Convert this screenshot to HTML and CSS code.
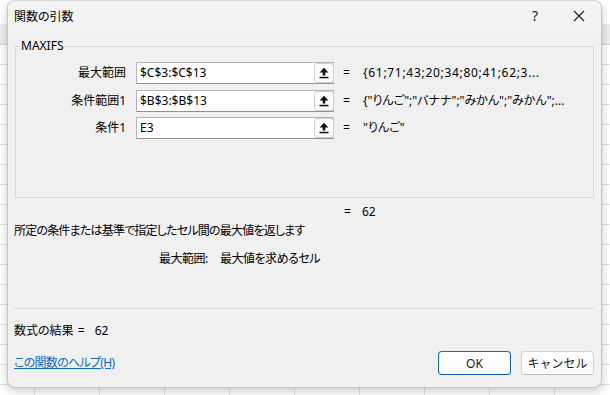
FILE: index.html
```html
<!DOCTYPE html>
<html lang="ja">
<head>
  <meta charset="UTF-8">
  <title>関数の引数</title>
  <link rel="stylesheet" href="styles.css">
</head>
<body>
  <div class="sheet-header"></div>
  <div class="dialog">
    <div class="titlebar">
      <span class="title">関数の引数</span>
      <span class="caption-btn help-btn">?</span>
      <span class="caption-btn">
        <svg width="12" height="12" viewBox="0 0 12 12"><path d="M1 1 L11 11 M11 1 L1 11" stroke="#1a1a1a" stroke-width="1.1" fill="none"/></svg>
      </span>
    </div>

    <div class="content">
      <fieldset class="group">
        <legend>MAXIFS</legend>
        <div class="args">
          <div class="arg">
            <span class="arg-name">最大範囲</span>
            <div class="ref">
              <span class="ref-text">$C$3:$C$13</span>
              <span class="ref-btn"><svg width="12" height="12" viewBox="0 0 12 12"><path d="M6 0.8 L1.6 5.6 L4.7 5.6 L4.7 8.6 L7.3 8.6 L7.3 5.6 L10.4 5.6 Z" fill="#111"/><rect x="1.5" y="9.8" width="9" height="1.5" fill="#111"/></svg></span>
            </div>
            <span class="eq">=</span>
            <span class="val val-num">{61;71;43;20;34;80;41;62;3...</span>
          </div>
          <div class="arg">
            <span class="arg-name">条件範囲1</span>
            <div class="ref">
              <span class="ref-text">$B$3:$B$13</span>
              <span class="ref-btn"><svg width="12" height="12" viewBox="0 0 12 12"><path d="M6 0.8 L1.6 5.6 L4.7 5.6 L4.7 8.6 L7.3 8.6 L7.3 5.6 L10.4 5.6 Z" fill="#111"/><rect x="1.5" y="9.8" width="9" height="1.5" fill="#111"/></svg></span>
            </div>
            <span class="eq">=</span>
            <span class="val">{"りんご";"バナナ";"みかん";"みかん";...</span>
          </div>
          <div class="arg">
            <span class="arg-name">条件1</span>
            <div class="ref">
              <span class="ref-text">E3</span>
              <span class="ref-btn"><svg width="12" height="12" viewBox="0 0 12 12"><path d="M6 0.8 L1.6 5.6 L4.7 5.6 L4.7 8.6 L7.3 8.6 L7.3 5.6 L10.4 5.6 Z" fill="#111"/><rect x="1.5" y="9.8" width="9" height="1.5" fill="#111"/></svg></span>
            </div>
            <span class="eq">=</span>
            <span class="val">"りんご"</span>
          </div>
        </div>
      </fieldset>

      <div class="total"><span class="eq-wide">=</span>62</div>
      <p class="desc">所定の条件または基準で指定したセル間の最大値を返します</p>
      <p class="arg-desc"><span class="arg-desc-name">最大範囲:</span>最大値を求めるセル</p>

      <hr class="sep">

      <div class="formula-result">数式の結果 <span class="eq-mid">=</span>62</div>

      <div class="footer">
        <a href="#" class="help-link">この関数のヘルプ(H)</a>
        <div class="buttons">
          <button class="btn btn-default">OK</button>
          <button class="btn">キャンセル</button>
        </div>
      </div>
    </div>
  </div>
</body>
</html>
```

FILE: styles.css
```css
html, body {
  margin: 0;
  padding: 0;
}
body {
  width: 610px;
  height: 395px;
  overflow: hidden;
  font-family: "Noto Sans", "Noto Sans CJK JP", sans-serif;
  font-size: 12px;
  line-height: 16px;
  color: #000;
  background-color: #fff;
  background-image:
    repeating-linear-gradient(to right, transparent 0, transparent 49px, #e1e1e1 49px, #e1e1e1 50px, transparent 50px, transparent 65px),
    repeating-linear-gradient(to bottom, transparent 0, transparent 19px, #e1e1e1 19px, #e1e1e1 20px);
  background-position: -15px 0, 0 5px;
  position: relative;
  font-feature-settings: "palt";
}
.sheet-header {
  position: absolute;
  left: 0;
  top: 24px;
  width: 610px;
  height: 20px;
  background: #ececec;
  border-bottom: 1px solid #d4d4d4;
}
.dialog {
  position: relative;
  margin-left: 7px;
  width: 595px;
  height: 388px;
  box-sizing: border-box;
  border: 1px solid #c4c4c4;
  border-top-color: #d6d6d6;
  border-radius: 8px;
  background: #f0f0f0;
  box-shadow: 0 3px 10px rgba(0, 0, 0, 0.22);
  overflow: hidden;
}
.titlebar {
  display: flex;
  align-items: center;
  height: 30px;
  padding-left: 6px;
  background: #f3f3f3;
}
.title {
  flex: 1;
  padding-top: 1px;
}
.caption-btn {
  width: 44px;
  height: 30px;
  display: flex;
  align-items: center;
  justify-content: center;
  font-size: 13px;
  color: #1a1a1a;
}
.help-btn {
  font-size: 14px;
}
.content {
  padding: 0 7px 0 6px;
}
.group {
  margin: 7px 0 0 1px;
  padding: 0;
  border: 1px solid #d9d9d9;
}
.group legend {
  margin-left: 4px;
  padding: 0 1px;
  line-height: 16px;
}
.args {
  height: 143px;
  box-sizing: border-box;
  padding-top: 8px;
  display: flex;
  flex-direction: column;
  gap: 5.5px;
}
.arg {
  display: flex;
  align-items: center;
  height: 22px;
}
.arg-name {
  width: 110px;
  text-align: right;
  margin-right: 10px;
}
.ref {
  width: 198px;
  height: 22px;
  box-sizing: border-box;
  border: 1px solid #b4b4b4;
  border-bottom-color: #8f8f8f;
  background: #fff;
  display: flex;
  align-items: center;
  justify-content: space-between;
}
.ref-text {
  padding-left: 3px;
}
.ref-btn {
  width: 20px;
  height: 20px;
  box-sizing: border-box;
  margin-right: -1px;
  border: 1px solid #cfcfcf;
  border-radius: 3px;
  background: #fbfbfb;
  display: flex;
  align-items: center;
  justify-content: center;
}
.eq {
  width: 20px;
  margin-left: 9px;
}
.val {
  white-space: nowrap;
}
.val-num {
  letter-spacing: 0.7px;
}
.total {
  margin-top: 6px;
  padding-left: 330px;
}
.eq-wide {
  display: inline-block;
  width: 18px;
}
.desc {
  margin: 3px 0 0;
  letter-spacing: -0.8px;
}
.arg-desc {
  margin: 12px 0 0;
  padding-left: 145px;
  letter-spacing: -0.5px;
}
.arg-desc-name {
  display: inline-block;
  width: 61px;
}
.sep {
  margin: 41px 0 0;
  border: 0;
  border-top: 1px solid #d9d9d9;
  height: 0;
}
.formula-result {
  margin-top: 14px;
}
.eq-mid {
  display: inline-block;
  width: 17px;
  margin-left: 1px;
}
.footer {
  margin-top: 12px;
  display: flex;
  align-items: center;
  justify-content: space-between;
  height: 24px;
}
.help-link {
  color: #0f67c6;
  text-decoration: underline;
  letter-spacing: -0.7px;
}
.buttons {
  display: flex;
  gap: 10px;
}
.btn {
  width: 73px;
  height: 24px;
  box-sizing: border-box;
  border: 1px solid #d1d1d1;
  border-bottom-color: #bdbdbd;
  border-radius: 4px;
  background: #fdfdfd;
  font-family: inherit;
  font-size: 12px;
  color: #1a1a1a;
  padding: 0;
}
.btn-default {
  border-color: #1169c5;
  border-bottom-color: #0a56a8;
}
```
